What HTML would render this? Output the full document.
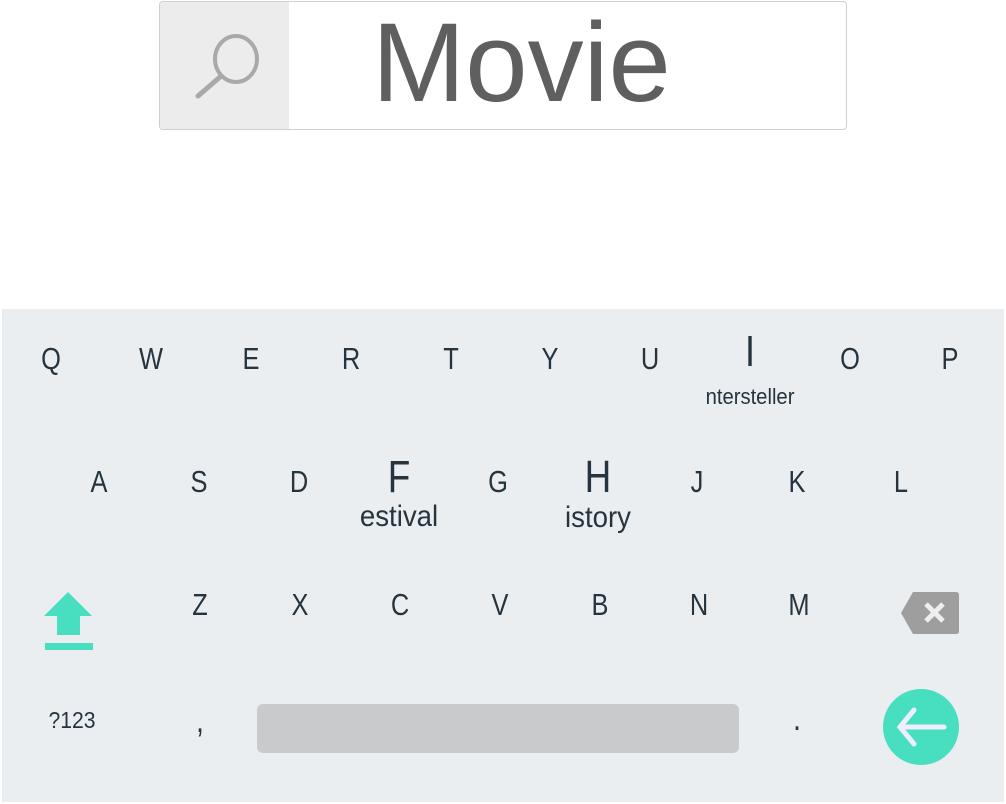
<!DOCTYPE html>
<html><head><style>
body{margin:0;width:1006px;height:804px;background:#fff;position:relative;overflow:hidden;font-family:"Liberation Sans",sans-serif}
.box{position:absolute;left:159px;top:1px;width:686px;height:127px;border:1.5px solid #cfcfcf;border-radius:4px;overflow:hidden;background:#fff}
.gl{position:absolute;left:0;top:0;width:129px;height:100%;background:#ececec}
.mv{position:absolute;left:212px;top:-3px;font-size:112px;color:#5f5f5f;line-height:127px}
.kb{position:absolute;left:2px;top:309px;width:1002px;height:493px;background:#eaeef1}
.k{position:absolute;transform:translateX(-50%) scaleX(0.82);color:#25343f;font-family:"Liberation Sans",sans-serif;font-size:31px;line-height:1;white-space:nowrap}
.s{position:absolute;transform:translateX(-50%) scaleX(0.92);color:#25343f;font-family:"Liberation Sans",sans-serif;white-space:nowrap;line-height:1}
</style></head><body>
<div class="box"><div class="gl"></div>
<svg style="position:absolute;left:0;top:0" width="140" height="127"><ellipse cx="76" cy="57" rx="21" ry="23" fill="none" stroke="#a9a9a9" stroke-width="4"/><line x1="60" y1="75" x2="38" y2="94" stroke="#a9a9a9" stroke-width="5" stroke-linecap="round"/></svg>
<div class="mv">Movie</div></div>
<div class="kb"></div>
<div class="k" style="left:51px;top:343px">Q</div>
<div class="k" style="left:151px;top:343px">W</div>
<div class="k" style="left:251px;top:343px">E</div>
<div class="k" style="left:351px;top:343px">R</div>
<div class="k" style="left:451px;top:343px">T</div>
<div class="k" style="left:550px;top:343px">Y</div>
<div class="k" style="left:650px;top:343px">U</div>
<div class="k" style="left:750px;top:330px;font-size:44px">I</div>
<div class="s" style="left:750px;top:386px;font-size:22px">ntersteller</div>
<div class="k" style="left:850px;top:343px">O</div>
<div class="k" style="left:950px;top:343px">P</div>
<div class="k" style="left:99px;top:466px">A</div>
<div class="k" style="left:199px;top:466px">S</div>
<div class="k" style="left:299px;top:466px">D</div>
<div class="k" style="left:399px;top:454px;font-size:45px">F</div>
<div class="s" style="left:399px;top:502px;font-size:30px">estival</div>
<div class="k" style="left:498px;top:466px">G</div>
<div class="k" style="left:598px;top:454px;font-size:45px">H</div>
<div class="s" style="left:598px;top:503px;font-size:30px">istory</div>
<div class="k" style="left:697px;top:466px">J</div>
<div class="k" style="left:797px;top:466px">K</div>
<div class="k" style="left:901px;top:466px">L</div>
<div class="k" style="left:200px;top:589px">Z</div>
<div class="k" style="left:300px;top:589px">X</div>
<div class="k" style="left:400px;top:589px">C</div>
<div class="k" style="left:500px;top:589px">V</div>
<div class="k" style="left:600px;top:589px">B</div>
<div class="k" style="left:699px;top:589px">N</div>
<div class="k" style="left:799px;top:589px">M</div>
<svg style="position:absolute;left:44px;top:592px" width="50" height="60"><polygon points="24,0 48,24 36,24 36,43 13,43 13,24 0,24" fill="#48dec0"/><rect x="1" y="51" width="48" height="7" fill="#48dec0"/></svg>
<svg style="position:absolute;left:901px;top:592px" width="58" height="42"><path d="M12 0H55Q58 0 58 3V39Q58 42 55 42H12L0 21Z" fill="#9e9e9e"/><path d="M25 12L42 29M42 12L25 29" stroke="#eee" stroke-width="5"/></svg>
<div class="s" style="left:72px;top:709px;font-size:23px">?123</div>
<div class="k" style="left:200px;top:704px;font-size:34px">,</div>
<div style="position:absolute;left:257px;top:704px;width:482px;height:49px;background:#c9cacc;border-radius:6px"></div>
<div class="k" style="left:797px;top:702px;font-size:34px">.</div>
<svg style="position:absolute;left:882px;top:688px" width="78" height="78"><circle cx="39" cy="39" r="38" fill="#48dec0"/><path d="M18 39H62M32 22L18 39L32 56" fill="none" stroke="#eef" stroke-width="5" stroke-linecap="round"/></svg>
</body></html>
